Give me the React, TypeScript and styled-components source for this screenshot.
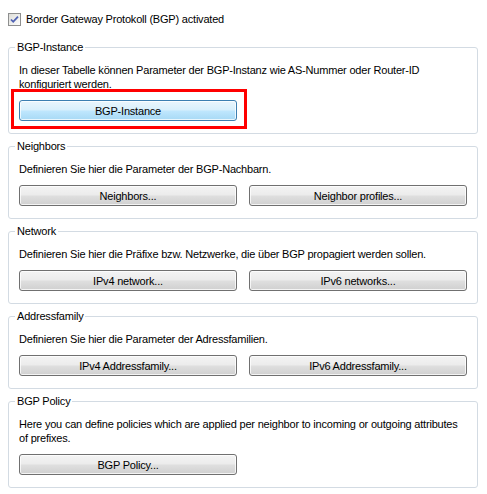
import React from "react";
import styled, { createGlobalStyle } from "styled-components";

const GlobalStyle = createGlobalStyle`
  html, body { margin: 0; padding: 0; background: #ffffff; }
  body {
    font-family: "Liberation Sans", Arial, sans-serif;
    font-size: 11px;
    color: #000000;
  }
`;

const Page = styled.div`
  width: 487px;
  height: 494px;
  box-sizing: border-box;
  padding: 12px 9px 0 8px;
  display: flex;
  flex-direction: column;
  gap: 5px;
  letter-spacing: -0.2px;
`;

const CheckRow = styled.label`
  display: flex;
  align-items: center;
  gap: 5px;
  height: 14px;
  line-height: 14px;
  margin-bottom: 9px;
`;

const Group = styled.fieldset`
  margin: 0;
  padding: 9px 10px 12px 10px;
  border: 1px solid #d3dbe3;
  border-radius: 3px;
  min-width: 0;
`;

const Legend = styled.legend`
  padding: 0 2px;
  margin-left: -4px;
  line-height: 14px;
`;

const Desc = styled.p`
  margin: 0 0 9px 0;
  line-height: 14px;
`;

const ButtonRow = styled.div`
  display: grid;
  grid-template-columns: 1fr 1fr;
  column-gap: 12px;
`;

const Highlight = styled.div`
  position: relative;
`;

const RedMark = styled.div`
  position: absolute;
  left: -8px;
  top: -11px;
  width: 236px;
  height: 40px;
  box-sizing: border-box;
  border: 3px solid #ff0000;
  pointer-events: none;
`;

const Button = styled.button<{ $active?: boolean }>`
  display: block;
  width: 100%;
  height: 21px;
  margin: 0;
  padding: 0;
  font: inherit;
  letter-spacing: inherit;
  color: #000;
  border-radius: 3px;
  border: 1px solid ${(p) => (p.$active ? "#3c7fb1" : "#707070")};
  box-shadow: inset 0 0 0 1px rgba(255, 255, 255, 0.75);
  background: ${(p) =>
    p.$active
      ? "linear-gradient(to bottom, #eaf6fd 0%, #d9f0fc 45%, #bee6fd 55%, #a7d9f5 100%)"
      : "linear-gradient(to bottom, #f4f4f4 0%, #ececec 45%, #dedede 55%, #d0d0d0 100%)"};
  cursor: default;
`;

const CheckBox = () => (
  <svg width="13" height="13" viewBox="0 0 13 13">
    <defs>
      <linearGradient id="cbg" x1="0" y1="0" x2="1" y2="1">
        <stop offset="0" stopColor="#dcdcd7" />
        <stop offset="1" stopColor="#ffffff" />
      </linearGradient>
    </defs>
    <rect x="0.5" y="0.5" width="12" height="12" fill="url(#cbg)" stroke="#8e8f8f" />
    <path d="M3 6.5 L5.2 8.8 L10 3.6" fill="none" stroke="#4f62b3" strokeWidth="1.8" />
  </svg>
);

export default function App() {
  return (
    <>
      <GlobalStyle />
      <Page>
        <CheckRow>
          <CheckBox />
          <span>Border Gateway Protokoll (BGP) activated</span>
        </CheckRow>

        <Group>
          <Legend>BGP-Instance</Legend>
          <Desc>
            In dieser Tabelle können Parameter der BGP-Instanz wie AS-Nummer oder Router-ID
            <br />
            konfiguriert werden.
          </Desc>
          <ButtonRow>
            <Highlight>
              <Button $active>BGP-Instance</Button>
              <RedMark />
            </Highlight>
          </ButtonRow>
        </Group>

        <Group>
          <Legend>Neighbors</Legend>
          <Desc>Definieren Sie hier die Parameter der BGP-Nachbarn.</Desc>
          <ButtonRow>
            <Button>Neighbors...</Button>
            <Button>Neighbor profiles...</Button>
          </ButtonRow>
        </Group>

        <Group>
          <Legend>Network</Legend>
          <Desc>Definieren Sie hier die Präfixe bzw. Netzwerke, die über BGP propagiert werden sollen.</Desc>
          <ButtonRow>
            <Button>IPv4 network...</Button>
            <Button>IPv6 networks...</Button>
          </ButtonRow>
        </Group>

        <Group>
          <Legend>Addressfamily</Legend>
          <Desc>Definieren Sie hier die Parameter der Adressfamilien.</Desc>
          <ButtonRow>
            <Button>IPv4 Addressfamily...</Button>
            <Button>IPv6 Addressfamily...</Button>
          </ButtonRow>
        </Group>

        <Group>
          <Legend>BGP Policy</Legend>
          <Desc>
            Here you can define policies which are applied per neighbor to incoming or outgoing attributes
            <br />
            of prefixes.
          </Desc>
          <ButtonRow>
            <Button>BGP Policy...</Button>
          </ButtonRow>
        </Group>
      </Page>
    </>
  );
}
